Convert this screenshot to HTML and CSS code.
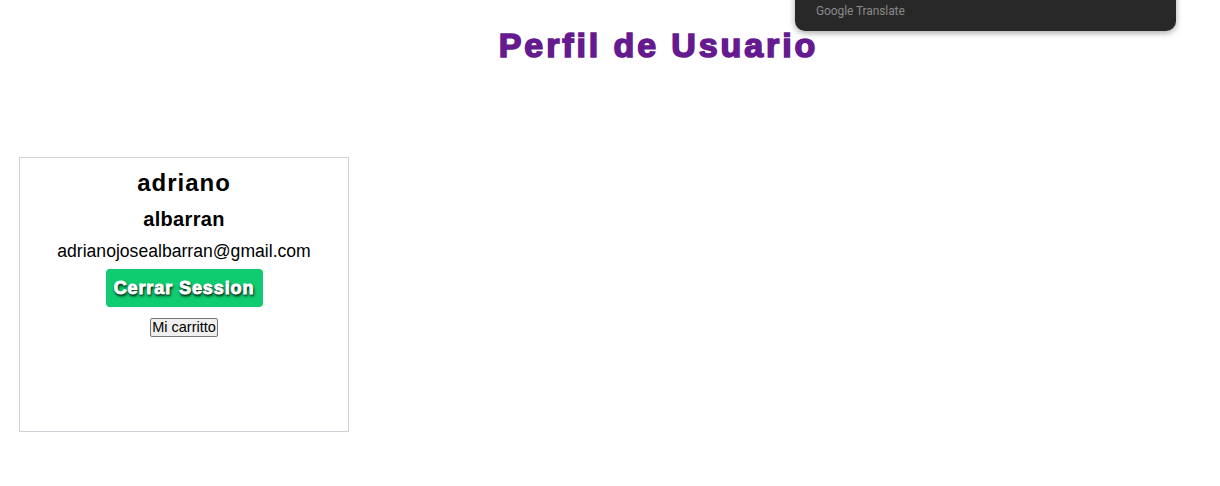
FILE: index.html
```html
<!DOCTYPE html>
<html lang="es">
<head>
<meta charset="utf-8">
<title>Perfil de Usuario</title>
<link rel="stylesheet" href="styles.css">
</head>
<body>
<div class="gt-popup"><span class="gt-brand">Google Translate</span></div>
<h1 class="title">Perfil de Usuario</h1>
<main class="content">
  <section class="card">
    <h2 class="name">adriano</h2>
    <h3 class="surname">albarran</h3>
    <p class="email">adrianojosealbarran@gmail.com</p>
    <button class="logout">Cerrar Session</button>
    <button class="cart">Mi carritto</button>
  </section>
</main>
</body>
</html>
```
FILE: styles.css
```css
html, body { margin: 0; padding: 0; background: #fff; }
body { font-family: "Liberation Sans", Arial, sans-serif; color: #000; position: relative; width: 1220px; height: 486px; overflow: hidden; }

.gt-popup {
  position: absolute;
  left: 795px;
  top: -20px;
  width: 381px;
  height: 51px;
  background: #282828;
  border-radius: 10px;
  box-shadow: 0 2px 6px rgba(0,0,0,0.35);
  box-sizing: border-box;
  padding: 21px 0 0 21px;
}
.gt-brand { font-family: "Roboto", "Liberation Sans", sans-serif; font-size: 12px; color: #8a8a8a; letter-spacing: -0.1px; }

.title {
  margin: 0;
  padding: 25px 0 0 97px;
  text-align: center;
  font-size: 34px;
  line-height: 40px;
  font-weight: 900;
  color: #651b8f;
  letter-spacing: 2.9px;
  -webkit-text-stroke: 1.6px #651b8f;
}

.content { padding: 92px 0 0 19px; }

.card {
  width: 330px;
  height: 275px;
  box-sizing: border-box;
  border: 1px solid #d0d0d8;
  display: flex;
  flex-direction: column;
  align-items: center;
  padding-top: 9px;
}
.name { margin: 0; font-size: 24px; line-height: 32px; font-weight: bold; letter-spacing: 1px; }
.surname { margin: 7px 0 0; font-size: 20px; line-height: 26px; font-weight: bold; letter-spacing: 0.3px; }
.email { margin: 7px 0 0; font-size: 17.6px; line-height: 24px; }
.logout {
  margin-top: 6px;
  width: 157px;
  height: 38px;
  border: none;
  border-radius: 4px;
  background: #10cc70;
  color: #fff;
  font-family: "Liberation Sans", Arial, sans-serif;
  font-size: 18px;
  font-weight: 900;
  letter-spacing: 0.9px;
  -webkit-text-stroke: 0.9px #fff;
  text-shadow: 1px 2px 3px rgba(0,0,0,1), 0 1px 2px rgba(0,0,0,0.6);
  padding: 0;
}
.cart {
  margin-top: 11px;
  font-family: "Liberation Sans", Arial, sans-serif;
  font-size: 14.5px;
  padding: 1px 1px;
  border: 1px solid #767676;
  border-radius: 2px;
  background: #efefef;
  color: #000;
  line-height: 15px;
}
```
